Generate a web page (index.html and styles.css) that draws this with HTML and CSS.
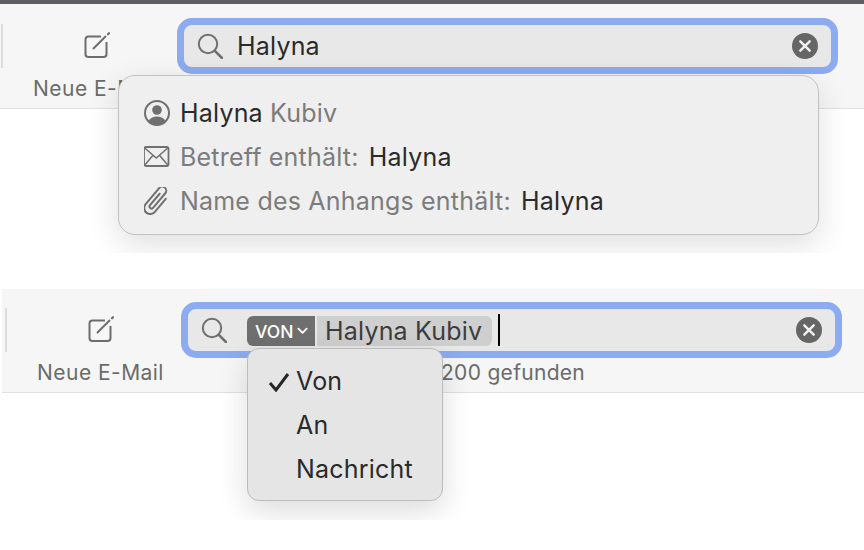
FILE: index.html
```html
<!DOCTYPE html>
<html lang="de">
<head>
<meta charset="utf-8">
<title>Suche</title>
<link rel="stylesheet" href="styles.css">
</head>
<body>
<section class="shot shot-a">
  <div class="topline"></div>
  <header class="toolbar">
    <div class="sep"></div>
    <div class="tool">
      <svg class="compose" viewBox="0 0 26 26"><path d="M17 4.500H4.500Q1.500 4.500 1.500 7.500V22Q1.500 25 4.500 25H19.500Q22.500 25 22.500 22V10" fill="none" stroke="#6d6d6d" stroke-width="2"/><path d="M9 17L22 4" stroke="#6d6d6d" stroke-width="2" fill="none"/><path d="M24 2.200L25 1.200" stroke="#6d6d6d" stroke-width="2.200" stroke-linecap="round"/></svg>
      <span class="tool-label">Neue E-Mail</span>
    </div>
    <div class="search-col">
      <div class="field">
        <svg class="lens" viewBox="0 0 26 26"><circle cx="11" cy="11" r="9.200" fill="none" stroke="#707070" stroke-width="2"/><path d="M17.800 17.800L25 25" stroke="#707070" stroke-width="2.600" stroke-linecap="round"/></svg>
        <span class="query">Halyna</span>
        <svg class="clear" viewBox="0 0 26 26"><circle cx="13" cy="13" r="13" fill="#666"/><path d="M8.300 8.300L17.700 17.700M17.700 8.300L8.300 17.700" stroke="#f2f2f2" stroke-width="2.400" stroke-linecap="round"/></svg>
      </div>
    </div>
  </header>
  <div class="suggest">
    <div class="s-row">
      <svg class="s-icon" viewBox="0 0 26 26"><circle cx="13" cy="13" r="12" fill="none" stroke="#707070" stroke-width="2"/><circle cx="13" cy="10" r="4.800" fill="#707070"/><path d="M4.500 21Q7 16.500 13 16.500T21.500 21Q18 25 13 25T4.500 21Z" fill="#707070"/></svg>
      <span class="dark">Halyna</span>&nbsp;<span class="muted">Kubiv</span>
    </div>
    <div class="s-row">
      <svg class="s-icon" viewBox="0 0 26 28"><rect x="0" y="4" width="24.500" height="19" rx="2" fill="none" stroke="#707070" stroke-width="1.800"/><path d="M.8 5L12.250 15L23.700 5M.8 22L8.800 12.500M23.700 22L15.700 12.500" fill="none" stroke="#707070" stroke-width="1.500"/></svg>
      <span class="muted">Betreff enthält:</span>&nbsp;<span class="dark value">Halyna</span>
    </div>
    <div class="s-row">
      <svg class="s-icon" viewBox="4 4 24 28"><path transform="rotate(40 16 17) translate(3 1.500)" d="M19 9V26a6 6 0 0 1-12 0V5a4 4 0 0 1 8 0V24a2 2 0 0 1-4 0V9" fill="none" stroke="#707070" stroke-width="2" stroke-linecap="round"/></svg>
      <span class="muted">Name des Anhangs enthält:</span>&nbsp;<span class="dark value">Halyna</span>
    </div>
  </div>
</section>

<section class="shot shot-b">
  <header class="toolbar">
    <div class="sep"></div>
    <div class="tool">
      <svg class="compose" viewBox="0 0 26 26"><path d="M17 4.500H4.500Q1.500 4.500 1.500 7.500V22Q1.500 25 4.500 25H19.500Q22.500 25 22.500 22V10" fill="none" stroke="#6d6d6d" stroke-width="2"/><path d="M9 17L22 4" stroke="#6d6d6d" stroke-width="2" fill="none"/><path d="M24 2.200L25 1.200" stroke="#6d6d6d" stroke-width="2.200" stroke-linecap="round"/></svg>
      <span class="tool-label">Neue E-Mail</span>
    </div>
    <div class="search-col">
      <div class="field">
        <svg class="lens" viewBox="0 0 26 26"><circle cx="11" cy="11" r="9.200" fill="none" stroke="#707070" stroke-width="2"/><path d="M17.800 17.800L25 25" stroke="#707070" stroke-width="2.600" stroke-linecap="round"/></svg>
        <div class="token">
          <span class="token-key">VON<svg class="chev" viewBox="0 0 12 8"><path d="M1.500 1.500L6 6L10.500 1.500" fill="none" stroke="#fff" stroke-width="2" stroke-linecap="round" stroke-linejoin="round"/></svg></span>
          <span class="token-val">Halyna Kubiv</span>
        </div>
        <span class="caret"></span>
        <svg class="clear" viewBox="0 0 26 26"><circle cx="13" cy="13" r="13" fill="#666"/><path d="M8.300 8.300L17.700 17.700M17.700 8.300L8.300 17.700" stroke="#f2f2f2" stroke-width="2.400" stroke-linecap="round"/></svg>
      </div>
      <div class="status">200 gefunden</div>
      <div class="menu">
        <div class="m-row"><svg class="check" viewBox="0 0 22 20"><path d="M2 11L8 18L20 2" fill="none" stroke="#262626" stroke-width="3"/></svg>Von</div>
        <div class="m-row">An</div>
        <div class="m-row">Nachricht</div>
      </div>
    </div>
  </header>
</section>
</body>
</html>
```
FILE: styles.css
```css
* { box-sizing: border-box; }
html, body { margin: 0; padding: 0; background: #fff; }
body {
  width: 864px;
  height: 550px;
  overflow: hidden;
  font-family: Inter, "Liberation Sans", sans-serif;
  color: #2a2a2a;
}
.shot { position: relative; overflow: hidden; }
.shot-a { height: 253px; margin-bottom: 36px; }
.shot-b { height: 231px; margin-left: 2px; }
.topline { height: 4px; background: #5e5e64; }
.toolbar {
  position: relative;
  display: flex;
  align-items: flex-start;
  height: 105px;
  background: #f6f6f6;
  border-bottom: 1px solid #e0e0e0;
}
.shot-a .toolbar { padding: 14px 0 0 1px; }
.shot-b .toolbar { height: 104px; padding: 13px 0 0 3px; }
.sep { width: 2px; height: 44px; margin-top: 6px; background: #dcdcdc; flex: none; }
.tool {
  display: flex;
  flex-direction: column;
  align-items: center;
  flex: none;
  width: 174px;
  padding: 14px 0 0 13px;
}
.compose { width: 26px; height: 26px; display: block; }
.tool-label {
  margin-top: 17px;
  font-size: 21px;
  line-height: 28px;
  letter-spacing: .45px;
  color: #6b6b6b;
  white-space: nowrap;
}
.search-col { position: relative; width: 661px; flex: none; }
.field {
  display: flex;
  align-items: center;
  height: 56px;
  padding: 0 13px;
  border: 7px solid #8cabf0;
  border-radius: 15px;
  background: #e8e8e8;
}
.lens { width: 26px; height: 26px; flex: none; }
.query { margin-left: 14px; font-size: 25px; letter-spacing: .2px; color: #2a2a2a; }
.clear { width: 26px; height: 26px; flex: none; margin-left: auto; }
.token { display: flex; margin: 2px 0 0 20px; height: 30px; }
.token-key {
  display: flex;
  align-items: center;
  gap: 4px;
  width: 68px;
  padding-left: 8px;
  background: #6f6f6f;
  color: #fff;
  font-size: 17.500px;
  font-weight: 500;
  border-radius: 6px 0 0 6px;
}
.chev { width: 11px; height: 8px; }
.token-val {
  display: flex;
  align-items: center;
  margin-left: 2px;
  width: 175px;
  padding-left: 8px;
  background: #cfcfcf;
  color: #3d3d3d;
  font-size: 25px;
  letter-spacing: .2px;
  border-radius: 0 6px 6px 0;
}
.caret { width: 2px; height: 32px; margin-left: 6px; background: #000; }
.status {
  margin: 1px 0 0 260px;
  font-size: 21px;
  line-height: 28px;
  letter-spacing: .3px;
  color: #6b6b6b;
}
.suggest {
  position: absolute;
  left: 118px;
  top: 75px;
  width: 701px;
  height: 160px;
  padding-top: 15px;
  background: #efefef;
  border: 1px solid #c2c2c2;
  border-radius: 17px;
  box-shadow: 0 10px 32px rgba(0, 0, 0, .13);
}
.s-row {
  display: flex;
  align-items: center;
  height: 44px;
  padding-left: 25px;
  font-size: 25px;
  letter-spacing: .2px;
  white-space: nowrap;
}
.s-icon { width: 26px; height: 28px; flex: none; margin-right: 10px; }
.dark { color: #2a2a2a; }
.value { margin-left: 3px; }
.muted { color: #7c7c7c; }
.menu {
  position: absolute;
  left: 66px;
  top: 46px;
  width: 196px;
  height: 153px;
  padding-top: 10px;
  background: #e5e5e5;
  border: 1px solid #bcbcbc;
  border-radius: 12px;
  box-shadow: 0 10px 30px rgba(0, 0, 0, .14);
}
.m-row {
  position: relative;
  height: 44px;
  line-height: 44px;
  padding-left: 48px;
  font-size: 25px;
  letter-spacing: .2px;
  color: #2a2a2a;
}
.check { position: absolute; left: 20px; top: 13px; width: 22px; height: 20px; }
```
